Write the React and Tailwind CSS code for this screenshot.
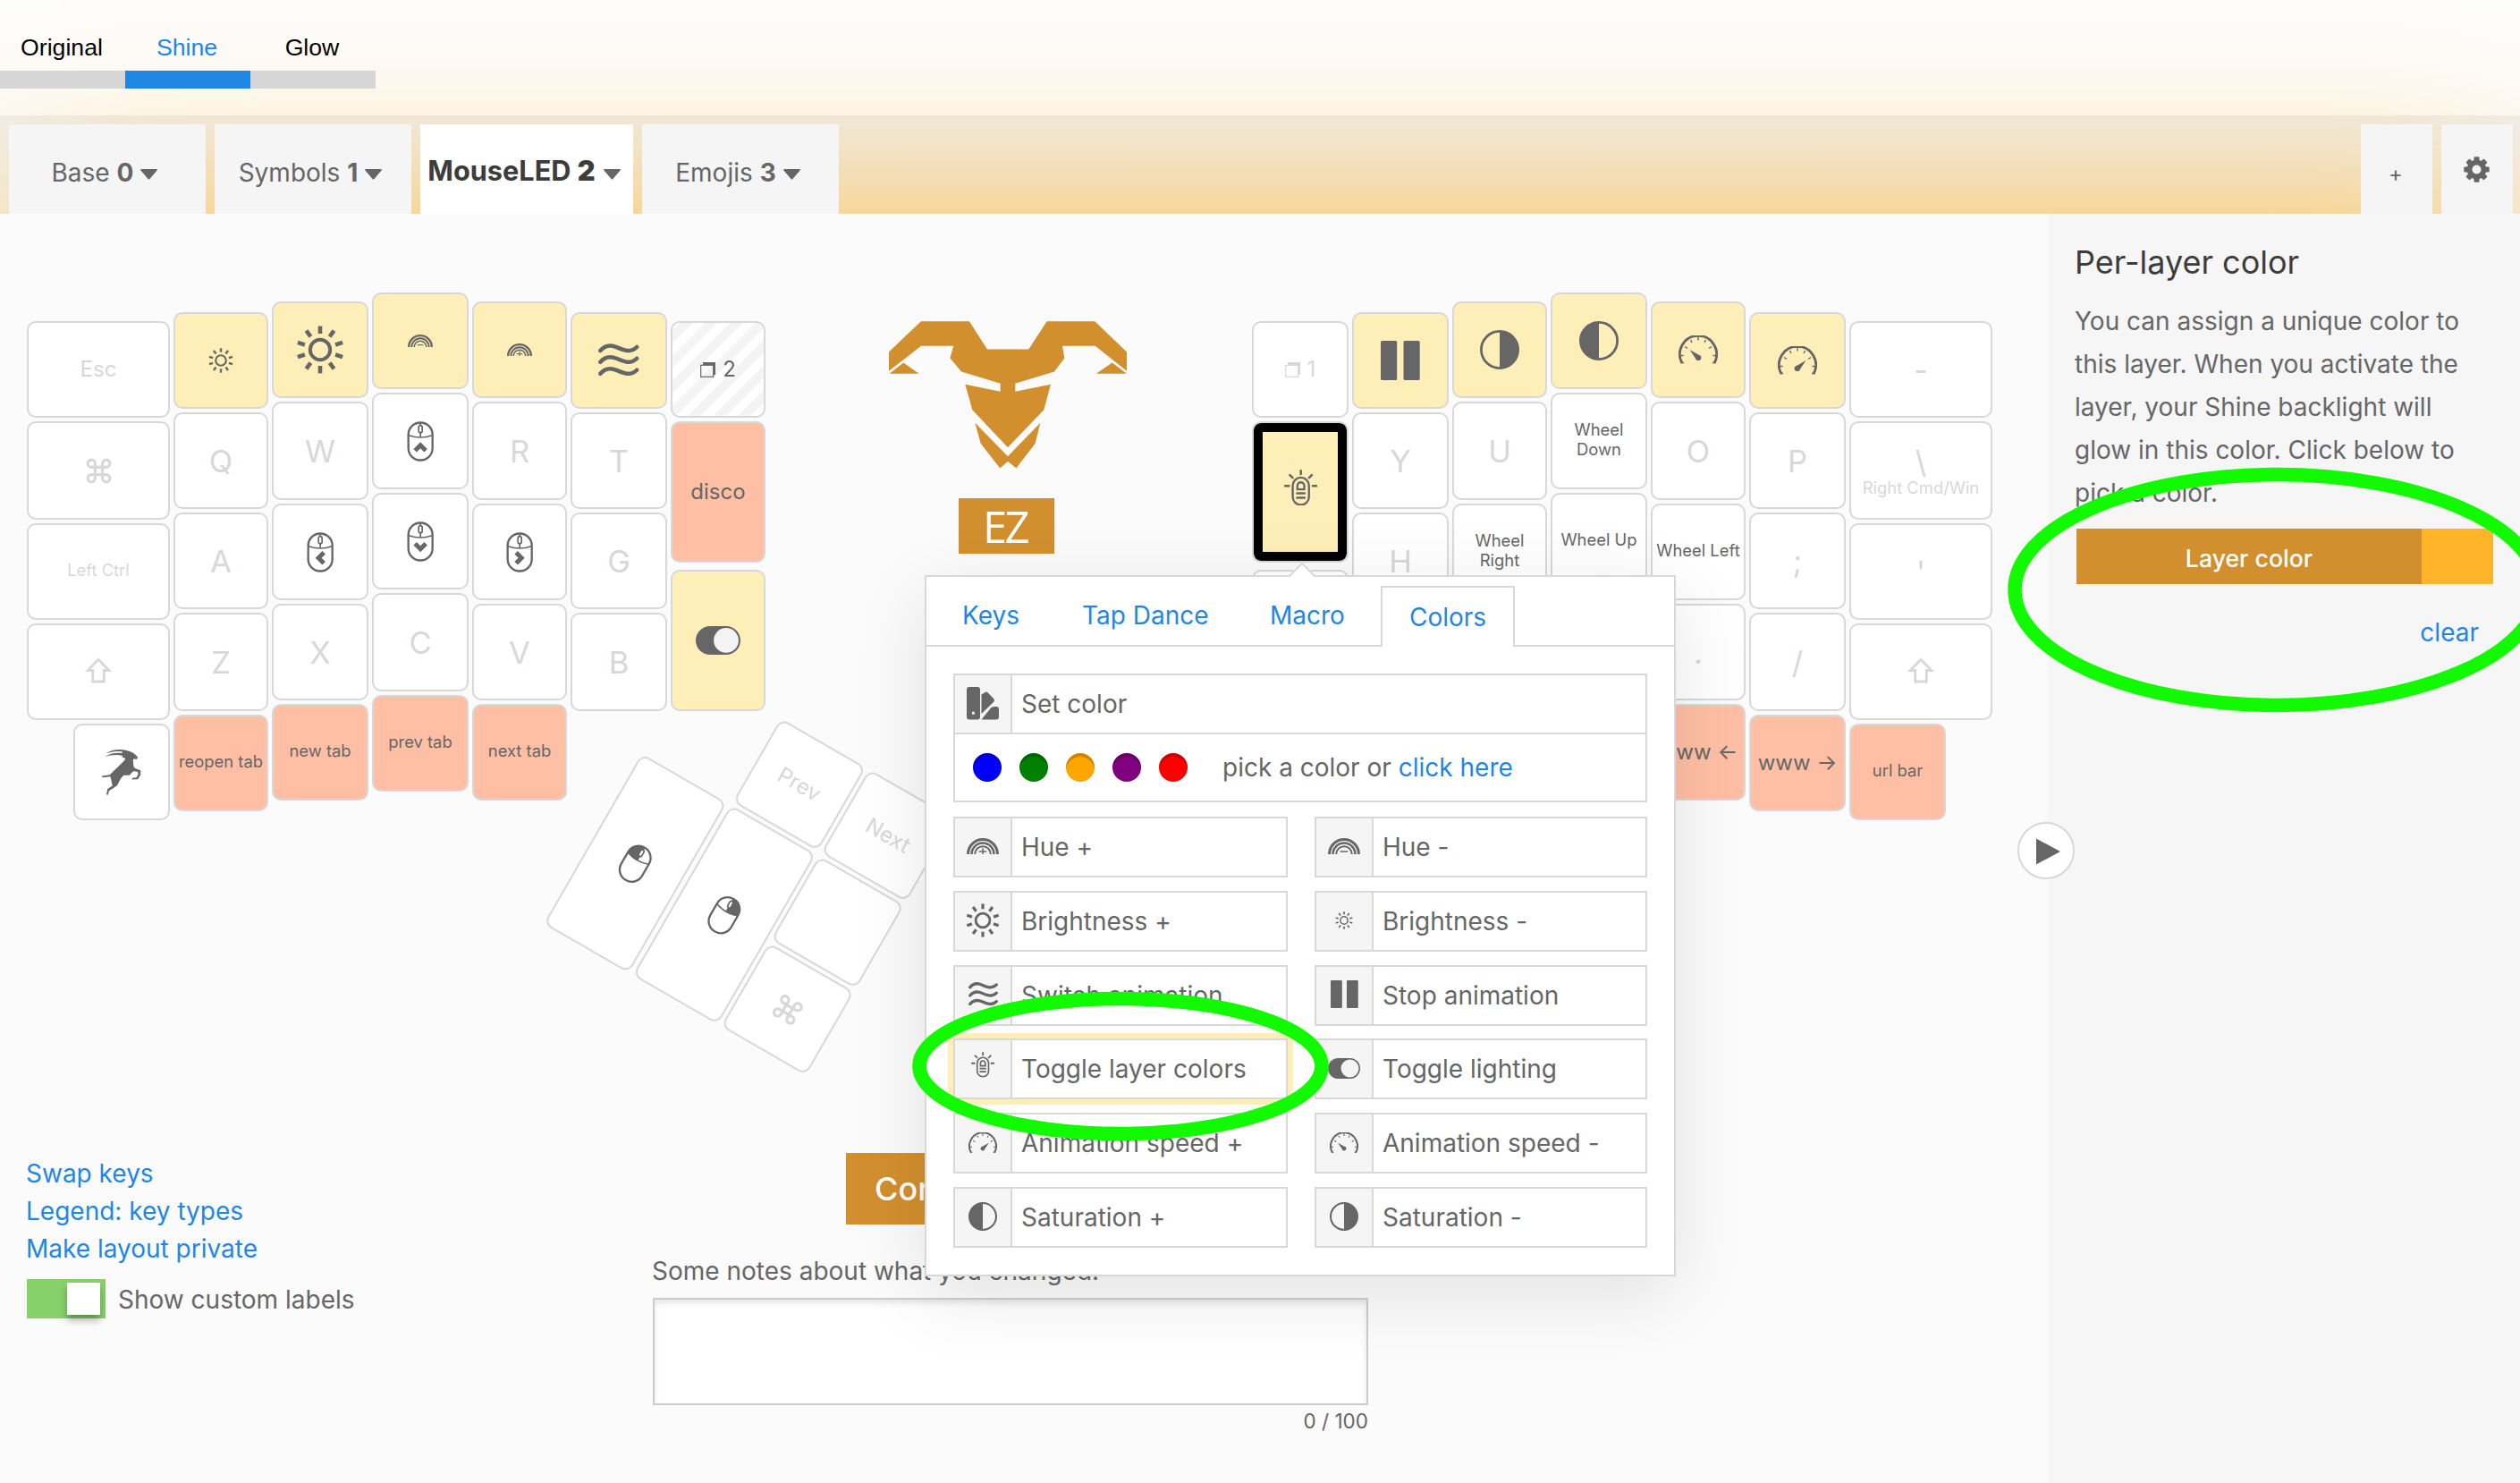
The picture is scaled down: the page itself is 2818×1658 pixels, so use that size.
import React from "react";
import { Command } from "lucide-react";

const INTER = "font-['Inter',sans-serif]";

/* ---------- icons ---------- */

function Sun({ size }) {
  return (
    <svg width={size} height={size} viewBox="-27 -27 54 54" fill="none" stroke="currentColor">
      <circle r="11.2" strokeWidth="4" />
      {[0, 36, 72, 108, 144, 180, 216, 252, 288, 324].map((a) => (
        <line key={a} x1="0" y1="-18" x2="0" y2="-26.4" strokeWidth="4.6" transform={`rotate(${a})`} />
      ))}
    </svg>
  );
}

function Rainbow({ width, plus }) {
  return (
    <svg width={width} height={width / 2} viewBox="0 0 84 42" fill="none" stroke="currentColor">
      <path d="M3.5 42a38.5 38.5 0 0 1 77 0" strokeWidth="7" />
      <path d="M13 42a29 29 0 0 1 58 0" strokeWidth="6" />
      <path d="M21.500 42a20.500 20.500 0 0 1 41 0" strokeWidth="4.500" />
      <path d="M32 35h20" strokeWidth="3.500" />
      {plus && <path d="M42 26v18" strokeWidth="3.500" />}
    </svg>
  );
}

function Waves({ width }) {
  return (
    <svg width={width} height={(width * 114) / 136} viewBox="809 217 136 114" fill="none" stroke="currentColor" strokeWidth="13.500" strokeLinecap="round">
      <path d="M816 241C832 222 852 221 872 230S917 250 938 229" />
      <path d="M816 279C832 260 852 259 872 268S917 288 938 267" />
      <path d="M816 318C832 299 852 298 872 307S917 327 938 306" />
    </svg>
  );
}

function Pause({ size }) {
  return (
    <svg width={size} height={size} viewBox="0 0 44 44" fill="currentColor">
      <rect x="0" y="0" width="18.200" height="44" rx="1.500" />
      <rect x="25.500" y="0" width="18.200" height="44" rx="1.500" />
    </svg>
  );
}

function Contrast({ size, right }) {
  return (
    <svg width={size} height={size} viewBox="0 0 44 44">
      <circle cx="22" cy="22" r="20.600" fill="none" stroke="currentColor" strokeWidth="2.800" />
      <path d={right ? "M22 1a21 21 0 0 1 0 42z" : "M22 1a21 21 0 0 0 0 42z"} fill="currentColor" />
    </svg>
  );
}

function Gauge({ width, plus }) {
  return (
    <svg width={width} height={(width * 32) / 44} viewBox="0 0 44 32" fill="none" stroke="currentColor">
      <path d="M4 31A20.600 20.600 0 1 1 40 31" strokeWidth="2.800" />
      <path d="M22 1v4.500M1 22.500h4.500M43 22.500h-4.500M7 12.500l3 2M37 12.500l-3 2M13.500 5l1.500 3M30.500 5l-1.500 3M2.500 30.500h3.500M38 30.500h3.500" strokeWidth="1.400" />
      <g transform={plus ? "translate(44 0) scale(-1 1)" : undefined} fill="currentColor" stroke="none">
        <path d="M12.500 16L24.500 22.700A3.200 3.200 0 0 1 20 27.200z" />
        <circle cx="22.200" cy="25" r="3" />
      </g>
    </svg>
  );
}

function Toggle({ width }) {
  return (
    <svg width={width} height={(width * 23) / 36} viewBox="0 0 36 23">
      <rect width="36" height="23" rx="11.500" fill="currentColor" />
      <circle cx="24.500" cy="11.500" r="10" fill="#fff" fillOpacity="0.92" />
    </svg>
  );
}

function Torch({ width, className }) {
  return (
    <svg className={className} width={width} height={(width * 121) / 110} viewBox="168 645 110 121" fill="none" stroke="currentColor">
      <rect x="196.500" y="671.500" width="54" height="91" rx="27" strokeWidth="7" />
      <path d="M212 711v-12a11.500 11.500 0 0 1 23 0v12z" strokeWidth="7" />
      <path d="M211 724h25M211 739h25" strokeWidth="7.500" strokeLinecap="round" />
      <path d="M223.500 649v11M187 663l9 9M260 663l-9 9M171 699h13M263 699h13" strokeWidth="7.500" strokeLinecap="round" />
    </svg>
  );
}

const CHEVRON_ANGLE = { up: 0, right: 90, down: 180, left: 270 };

function Mouse({ arrow, button }) {
  return (
    <svg width="30" height="45" viewBox="163.500 485 90 135" fill="none" stroke="currentColor">
      {button === "left" && <path d="M169 533V529a40 40 0 0 1 40-40V538Q184 538 169 533z" fill="currentColor" />}
      {button === "right" && <path d="M249 533V529a40 40 0 0 0-40-40V538Q234 538 249 533z" fill="currentColor" />}
      <rect x="168.500" y="489.500" width="81" height="126" rx="40" strokeWidth="7" />
      <path d="M170 532Q209 546 248 532" strokeWidth="5" />
      <path d="M209 490v10M209 524v14" strokeWidth="5" />
      <rect x="203" y="499" width="12" height="24" rx="6" strokeWidth="5" fill={button ? "#fff" : "none"} />
      {arrow && (
        <path d="M191 583L209 565L227 583" strokeWidth="15" transform={`rotate(${CHEVRON_ANGLE[arrow]} 209 571)`} />
      )}
    </svg>
  );
}

function Shift() {
  return (
    <svg className="mb-1" width="30" height="29" viewBox="0 0 30 29" fill="none" stroke="currentColor" strokeWidth="2.800">
      <path d="M15 2.200L26.800 14.500H21.300V27H8.700V14.500H3.200z" />
    </svg>
  );
}

function LayerIcon() {
  return (
    <svg width="17" height="17" viewBox="0 0 17 17">
      <path d="M3 0H17V14H15V3H3z" fill="currentColor" />
      <rect x="0.700" y="3.300" width="14" height="13" fill="none" stroke="currentColor" strokeWidth="1.200" />
    </svg>
  );
}

function Antelope() {
  return (
    <svg width="44" height="51" viewBox="272 715 105 152" preserveAspectRatio="none" fill="currentColor">
      <path d="M283 728C300 713 322 713 338 718C352 722 362 731 368 741L365 747L356 746L355 752C357 765 354 773 362 778L375 784L375 799L368 814L352 815L353 810L364 808L369 796L367 789L356 787L345 801L330 801L322 812L313 834L303 843L291 852L288 866L284 865L287 846L300 836L296 812L294 805L273 808L272 803L293 799C305 783 320 768 333 750L334 743L325 741L328 736C310 731 295 733 280 740C292 728 308 725 326 727V722C310 719 296 722 283 728z" />
    </svg>
  );
}

function Swatches() {
  return (
    <svg width="36" height="37" viewBox="0 0 36 37" fill="currentColor">
      <path fillRule="evenodd" d="M3 0h9a3 3 0 0 1 3 3v30.500a3 3 0 0 1-3 3H3a3 3 0 0 1-3-3V3a3 3 0 0 1 3-3zM7.500 27.500a1.700 1.700 0 1 0 0 3.400a1.700 1.700 0 1 0 0-3.400z" />
      <path d="M16.500 8.500L21 5.800Q22.500 5 23.600 6.300L30.500 13.500Q31.500 15 30.500 16.500L16.500 30z" />
      <path d="M16.500 36.500L27 23.500Q28.500 22 30.500 22H33Q36 22 36 25V33.500Q36 36.500 33 36.500z" />
    </svg>
  );
}

function Gear() {
  return (
    <svg width="29" height="29" viewBox="-14.500 -14.500 29 29" fill="currentColor">
      {[0, 45, 90, 135].map((a) => (
        <rect key={a} x="-3" y="-14.200" width="6" height="28.400" rx="1.200" transform={`rotate(${a})`} />
      ))}
      <circle r="10.800" />
      <circle r="5" fill="#f5f5f5" />
    </svg>
  );
}

function Caret() {
  return (
    <svg width="19" height="12" viewBox="0 0 19 12" className="shrink-0" fill="#666">
      <path d="M1 0H18Q19.400 .3 18.600 1.500L10.500 11Q9.500 12 8.500 11L.4 1.500Q-.4 .3 1 0z" />
    </svg>
  );
}

function Logo() {
  return (
    <svg className="mr-0.5" width="266" height="165" viewBox="102 87 798 494" fill="#d28f2e">
      <path d="M102 190L210 87H372L432 181H571L632 87H793L900 190V254L794 170H684L691 211L657 256L526 296V323L645 299L622 384L501 510L382 384L358 299L476 323V296L345 256L307 210L319 170H210L102 254z" />
      <path d="M104 263L151 226L203 263zM798 263L851 226L900 263z" />
      <path d="M391 428L501 540L610 428L593 497L529 580L501 557L475 580L410 497z" />
    </svg>
  );
}

/* ---------- keyboard ---------- */

const Big = ({ children }) => <span className="text-[34.500px] leading-[35px]">{children}</span>;
const Mid = ({ children }) => <span className="text-[24px] leading-none">{children}</span>;
const Small = ({ children }) => <span className="pb-1 text-[18.400px] leading-[22px]">{children}</span>;
const Cmd = () => <Command size={33} strokeWidth={2.3} />;

const PLAIN = "border-[#d8d8d8] bg-white text-[#d8d8d8]";
const DARK = "border-[#d8d8d8] bg-white text-[#666]";
const YELLOW = "border-[#d8d8d8] bg-[#feefb9] text-[#666]";
const PEACH = "border-[#d8d8d8] bg-[#ffbfa4] text-[#666]";
const STRIPED =
  "border-[#d8d8d8] bg-[repeating-linear-gradient(-45deg,#fff_0_10px,#f4f4f4_10px_20px)] text-[#666]";
const SELECTED = "border-[#d8d8d8] bg-[#feefb9] text-[#666] shadow-[inset_0_0_0_10px_#000]";

function Key({ tone = PLAIN, size = "w-full h-[108px]", children }) {
  return (
    <div className={`${size} ${tone} flex shrink-0 items-center justify-center rounded-[10px] border-2 text-center`}>
      {children}
    </div>
  );
}

function Column({ className, children }) {
  return <div className={`flex shrink-0 flex-col gap-1 ${className}`}>{children}</div>;
}

const TALL = "w-full h-[110px]";
const ONE_HALF = "w-full h-[158px]";

function LeftHalf() {
  return (
    <div className="flex items-start gap-1">
      <Column className="mt-8 w-40">
        <Key><Mid>Esc</Mid></Key>
        <Key size={TALL}><Cmd /></Key>
        <Key><Small>Left Ctrl</Small></Key>
        <Key><Shift /></Key>
        <Key tone={DARK} size="h-[108px] w-[108px] self-end"><Antelope /></Key>
      </Column>
      <Column className="mt-[22px] w-[106px]">
        <Key tone={YELLOW}><Sun size={28} /></Key>
        <Key><Big>Q</Big></Key>
        <Key><Big>A</Big></Key>
        <Key size={TALL}><Big>Z</Big></Key>
        <Key tone={PEACH}><Small>reopen tab</Small></Key>
      </Column>
      <Column className="mt-[10px] w-[108px]">
        <Key tone={YELLOW}><Sun size={54} /></Key>
        <Key size={TALL}><Big>W</Big></Key>
        <Key tone={DARK}><Mouse arrow="left" /></Key>
        <Key><Big>X</Big></Key>
        <Key tone={PEACH}><Small>new tab</Small></Key>
      </Column>
      <Column className="w-[108px]">
        <Key tone={YELLOW}><Rainbow width={28} /></Key>
        <Key tone={DARK}><Mouse arrow="up" /></Key>
        <Key tone={DARK}><Mouse arrow="down" /></Key>
        <Key size={TALL}><Big>C</Big></Key>
        <Key tone={PEACH}><Small>prev tab</Small></Key>
      </Column>
      <Column className="mt-[10px] w-[106px]">
        <Key tone={YELLOW}><Rainbow width={28} plus /></Key>
        <Key size={TALL}><Big>R</Big></Key>
        <Key tone={DARK}><Mouse arrow="right" /></Key>
        <Key><Big>V</Big></Key>
        <Key tone={PEACH}><Small>next tab</Small></Key>
      </Column>
      <Column className="mt-[22px] w-[108px]">
        <Key tone={YELLOW}><Waves width={45.5} /></Key>
        <Key><Big>T</Big></Key>
        <Key><Big>G</Big></Key>
        <Key size={TALL}><Big>B</Big></Key>
      </Column>
      <Column className="mt-8 w-[106px]">
        <Key tone={STRIPED}>
          <span className="flex items-center gap-2"><LayerIcon /><Mid>2</Mid></span>
        </Key>
        <Key tone={PEACH} size={ONE_HALF}><Mid>disco</Mid></Key>
        <Key tone={YELLOW} size="mt-1 w-full h-[158px]"><Toggle width={50} /></Key>
      </Column>
    </div>
  );
}

function RightHalf() {
  return (
    <div className="flex items-start gap-1">
      <Column className="mt-8 w-[108px]">
        <Key><span className="flex items-center gap-2"><LayerIcon /><Mid>1</Mid></span></Key>
        <Key tone={SELECTED} size={ONE_HALF}><Torch width={37} className="mb-[10px]" /></Key>
        <Key size="mt-1 w-full h-[158px]" />
      </Column>
      <Column className="mt-[22px] w-[108px]">
        <Key tone={YELLOW}><Pause size={44} /></Key>
        <Key><Big>Y</Big></Key>
        <Key><Big>H</Big></Key>
        <Key size={TALL}><Big>N</Big></Key>
      </Column>
      <Column className="mt-[10px] w-[106px]">
        <Key tone={YELLOW}><Contrast size={44} right /></Key>
        <Key size={TALL}><Big>U</Big></Key>
        <Key tone={DARK}><Small>Wheel<br />Right</Small></Key>
        <Key><Big>M</Big></Key>
      </Column>
      <Column className="w-[108px]">
        <Key tone={YELLOW}><Contrast size={44} /></Key>
        <Key tone={DARK}><Small>Wheel<br />Down</Small></Key>
        <Key tone={DARK}><Small>Wheel Up</Small></Key>
        <Key size={TALL}><Big>,</Big></Key>
      </Column>
      <Column className="mt-[10px] w-[106px]">
        <Key tone={YELLOW}><Gauge width={44} /></Key>
        <Key size={TALL}><Big>O</Big></Key>
        <Key tone={DARK}><Small>Wheel Left</Small></Key>
        <Key><Big>.</Big></Key>
        <Key tone={PEACH}><Mid>www ←</Mid></Key>
      </Column>
      <Column className="mt-[22px] w-[108px]">
        <Key tone={YELLOW}><Gauge width={44} plus /></Key>
        <Key><Big>P</Big></Key>
        <Key><Big>;</Big></Key>
        <Key size={TALL}><Big>/</Big></Key>
        <Key tone={PEACH}><Mid>www →</Mid></Key>
      </Column>
      <Column className="mt-8 w-40">
        <Key><Big>-</Big></Key>
        <Key size={TALL}>
          <span className="flex flex-col items-center pt-1.5"><Big>\</Big><Small>Right Cmd/Win</Small></span>
        </Key>
        <Key><Big>'</Big></Key>
        <Key><Shift /></Key>
        <Key tone={PEACH} size="h-[108px] w-[108px]"><Small>url bar</Small></Key>
      </Column>
    </div>
  );
}

function ThumbCluster() {
  return (
    <div className="absolute left-[668px] top-[568.500px] flex rotate-[30deg] items-end gap-[4.600px]">
      <Column className="w-[110px]">
        <Key tone={DARK} size="h-[220px] w-full"><Mouse button="left" /></Key>
      </Column>
      <Column className="w-[110px]">
        <Key><Mid>Prev</Mid></Key>
        <Key tone={DARK} size="h-[220px] w-full"><Mouse button="right" /></Key>
      </Column>
      <Column className="w-[110px]">
        <Key><Mid>Next</Mid></Key>
        <Key />
        <Key><Cmd /></Key>
      </Column>
    </div>
  );
}

/* ---------- key picker popup ---------- */

const OPTIONS = [
  ["Hue +", <Rainbow width={36} plus />, "Hue -", <Rainbow width={36} />],
  ["Brightness +", <Sun size={38} />, "Brightness -", <Sun size={20} />],
  ["Switch animation", <Waves width={33} />, "Stop animation", <Pause size={31} />],
  ["Toggle layer colors", <Torch width={26} className="mb-2" />, "Toggle lighting", <Toggle width={36} />],
  ["Animation speed +", <Gauge width={32} plus />, "Animation speed -", <Gauge width={32} />],
  ["Saturation +", <Contrast size={32} />, "Saturation -", <Contrast size={32} right />],
];

function Option({ label, icon, className = "" }) {
  return (
    <div className={`flex h-[68px] border-2 border-[#d8d8d8] bg-white ${className}`}>
      <div className="flex w-[64px] shrink-0 items-center justify-center border-r-2 border-[#d8d8d8] bg-[#f5f5f5] pb-0.5">
        {icon}
      </div>
      <span className="pl-[10px] leading-[64px]">{label}</span>
    </div>
  );
}

function Popup() {
  return (
    <div className="absolute left-[1034px] top-[643px] z-20 h-[784px] w-[840px] border-2 border-[#d8d8d8] bg-white text-[28px] text-[#666] shadow-[0_20px_80px_rgba(0,0,0,0.1)]">
      <div className="absolute left-[409px] top-[-12px] size-[22px] rotate-45 border-l-2 border-t-2 border-[#d8d8d8] bg-white" />
      <div className="relative flex h-[78px] items-end border-b-2 border-[#d8d8d8] text-[#1f87e3]">
        <span className="ml-[40px] w-[134px] leading-[65px]">Keys</span>
        <span className="w-[210px] leading-[65px]">Tap Dance</span>
        <span className="w-[124px] leading-[65px]">Macro</span>
        <span className="mb-[-2px] h-[68px] w-[150px] border-2 border-b-0 border-[#d8d8d8] bg-white text-center leading-[66px]">
          Colors
        </span>
      </div>
      <div className="mt-[30px] px-[30px]">
        <Option label="Set color" icon={<Swatches />} />
        <div className="flex h-[76px] items-center border-2 border-t-0 border-[#d8d8d8] pl-5">
          <div className="flex gap-5">
            <i className="size-8 rounded-full bg-[#0000ff] shadow-[inset_0_4px_0_rgba(0,0,0,0.2)]" />
            <i className="size-8 rounded-full bg-[#008000] shadow-[inset_0_4px_0_rgba(0,0,0,0.2)]" />
            <i className="size-8 rounded-full bg-[#ffa500] shadow-[inset_0_4px_0_rgba(0,0,0,0.2)]" />
            <i className="size-8 rounded-full bg-[#800080] shadow-[inset_0_4px_0_rgba(0,0,0,0.2)]" />
            <i className="size-8 rounded-full bg-[#ff0000] shadow-[inset_0_4px_0_rgba(0,0,0,0.2)]" />
          </div>
          <span className="ml-[39px]">
            pick a color or <span className="text-[#1f87e3]">click here</span>
          </span>
        </div>
        <div className="mt-4 grid grid-cols-[374px_372px] gap-x-[30px] gap-y-[14.800px]">
          {OPTIONS.map(([a, ia, b, ib]) => (
            <React.Fragment key={a}>
              <Option label={a} icon={ia} className={a === "Toggle layer colors" ? "shadow-[0_0_0_6px_#feefb9]" : ""} />
              <Option label={b} icon={ib} />
            </React.Fragment>
          ))}
        </div>
      </div>
    </div>
  );
}

/* ---------- page ---------- */

function LayerTab({ name, n, active }) {
  return (
    <div
      className={
        active
          ? "flex w-[238px] items-center justify-center gap-[9px] bg-white pr-1.5 pt-3 text-[30.700px] font-bold text-[#3c3c3c]"
          : "flex w-[220px] items-center justify-center gap-2 bg-[#f5f5f5] pr-1.5 pt-3 text-[28px] text-[#666]"
      }
    >
      <span className={`whitespace-nowrap ${active ? "pb-2" : "pb-[5px]"}`}>{name} <b>{n}</b></span>
      <Caret />
    </div>
  );
}

export default function App() {
  return (
    <div className={`relative h-[1658px] w-[2818px] overflow-hidden bg-[#fdfdfd] text-[28px] text-[#666] ${INTER}`}>
      <header className="relative z-10 h-[129px] pt-7 font-['Liberation_Sans',sans-serif] text-[26.670px] text-black">
        <div className="flex w-[420px] text-center leading-[51px]">
          <span className="w-[140px] border-b-[20px] border-[#d6d6d6] pr-0.5">Original</span>
          <span className="w-[140px] border-b-[20px] border-[#1f87e3] pr-0.5 text-[#1f87e3]">Shine</span>
          <span className="w-[140px] border-b-[20px] border-[#d6d6d6] pr-0.5">Glow</span>
        </div>
      </header>

      <nav className="relative z-10 flex h-[110px] gap-[10px] bg-linear-to-b from-black/5 to-black/[0.03] px-[10px] pt-[10px]">
        <LayerTab name="Base" n="0" />
        <LayerTab name="Symbols" n="1" />
        <LayerTab name="MouseLED" n="2" active />
        <LayerTab name="Emojis" n="3" />
        <div className="ml-auto mr-[-2px] flex gap-[10px]">
          <div className="flex w-20 items-center justify-center bg-[#f5f5f5] pr-0.5 pt-3 text-[24px]">+</div>
          <div className="flex w-20 items-center justify-center bg-[#f5f5f5] pr-0.5"><Gear /></div>
        </div>
      </nav>

      <div className="relative flex h-[1419px] bg-[#fbfbfb] shadow-[0_0_200px_#ffb62ce6]">
        <main className="w-[2290px]">
          <section className="relative flex h-[1050px] pl-[30px] pt-[88px]">
            <LeftHalf />
            <div className="flex w-[544px] flex-col items-center pt-8">
              <Logo />
              <div className="mr-[5px] mt-[33px] h-[62px] w-[107px] bg-[#d28f2e] pr-[3px] text-center font-['Open_Sans',sans-serif] text-[49px] leading-[62px] tracking-[-2.700px] text-[#fbfbfb]">
                EZ
              </div>
            </div>
            <RightHalf />
            <ThumbCluster />
          </section>

          <section className="flex">
            <div className="w-[700px] shrink-0 pl-[29px] pt-0.5 leading-[42px]">
              <div className="text-[#1f87e3]">
                <p>Swap keys</p>
                <p>Legend: key types</p>
                <p>Make layout private</p>
              </div>
              <div className="ml-px mt-[13px] flex items-center gap-[14px]">
                <div className="flex h-11 w-[88px] justify-end bg-[#87d16b] p-1 pr-1.5">
                  <div className="h-9 w-[37px] bg-white shadow-[0_6px_8px_rgba(0,0,0,0.3)]" />
                </div>
                <span className="pt-0.5">Show custom labels</span>
              </div>
            </div>
            <div className="ml-[30px] flex w-[800px] flex-col">
              <button className="h-20 w-[368px] self-center bg-[#d28f2e] pl-8 text-left text-[36px] font-medium text-white">
                Compile
              </button>
              <span className="-ml-px mt-[31px] leading-[42px]">Some notes about what you changed:</span>
              <div className="mt-[9px] h-[120px] border-2 border-[#ccc] bg-white shadow-[inset_0_4px_6px_rgba(0,0,0,0.1)]" />
              <span className="self-end text-[22.500px] leading-9">0 / 100</span>
            </div>
          </section>
        </main>

        <aside className="relative w-[528px] bg-[#f6f6f6] pl-[30px] pr-[30px] pt-[30px]">
          <h2 className="text-[36px] leading-[48px] text-[#3c3c3c]">Per-layer color</h2>
          <p className="mt-[18px] w-[466px] leading-[48px]">
            You can assign a unique color to<br />
            this layer. When you activate the<br />
            layer, your Shine backlight will<br />
            glow in this color. Click below to<br />
            pick a color.
          </p>
          <div className="ml-0.5 mt-4 flex h-[62px]">
            <button className="flex-1 bg-[#d28f2e] pt-[3px] text-[26.670px] font-medium text-white">Layer color</button>
            <span className="w-20 bg-[#ffb42a]" />
          </div>
          <p className="mt-[33px] pr-4 text-right text-[#1f87e3]">clear</p>
          <div className="absolute left-[-34px] top-[680px] flex size-16 items-center justify-center rounded-full border-2 border-[#d8d8d8] bg-white pl-1 pt-0.5">
            <svg width="27" height="30" viewBox="0 0 27 30" fill="#666"><path d="M0 .5L27 15L0 29.500z" /></svg>
          </div>
        </aside>
      </div>

      <Popup />

      <svg className="pointer-events-none absolute left-0 top-0 z-30" width="2818" height="1658" fill="none" stroke="#11fa00" strokeWidth="15.500">
        <ellipse cx="1253" cy="1192" rx="225" ry="75.500" />
        <ellipse cx="2546" cy="659.500" rx="293" ry="129" />
      </svg>
    </div>
  );
}
